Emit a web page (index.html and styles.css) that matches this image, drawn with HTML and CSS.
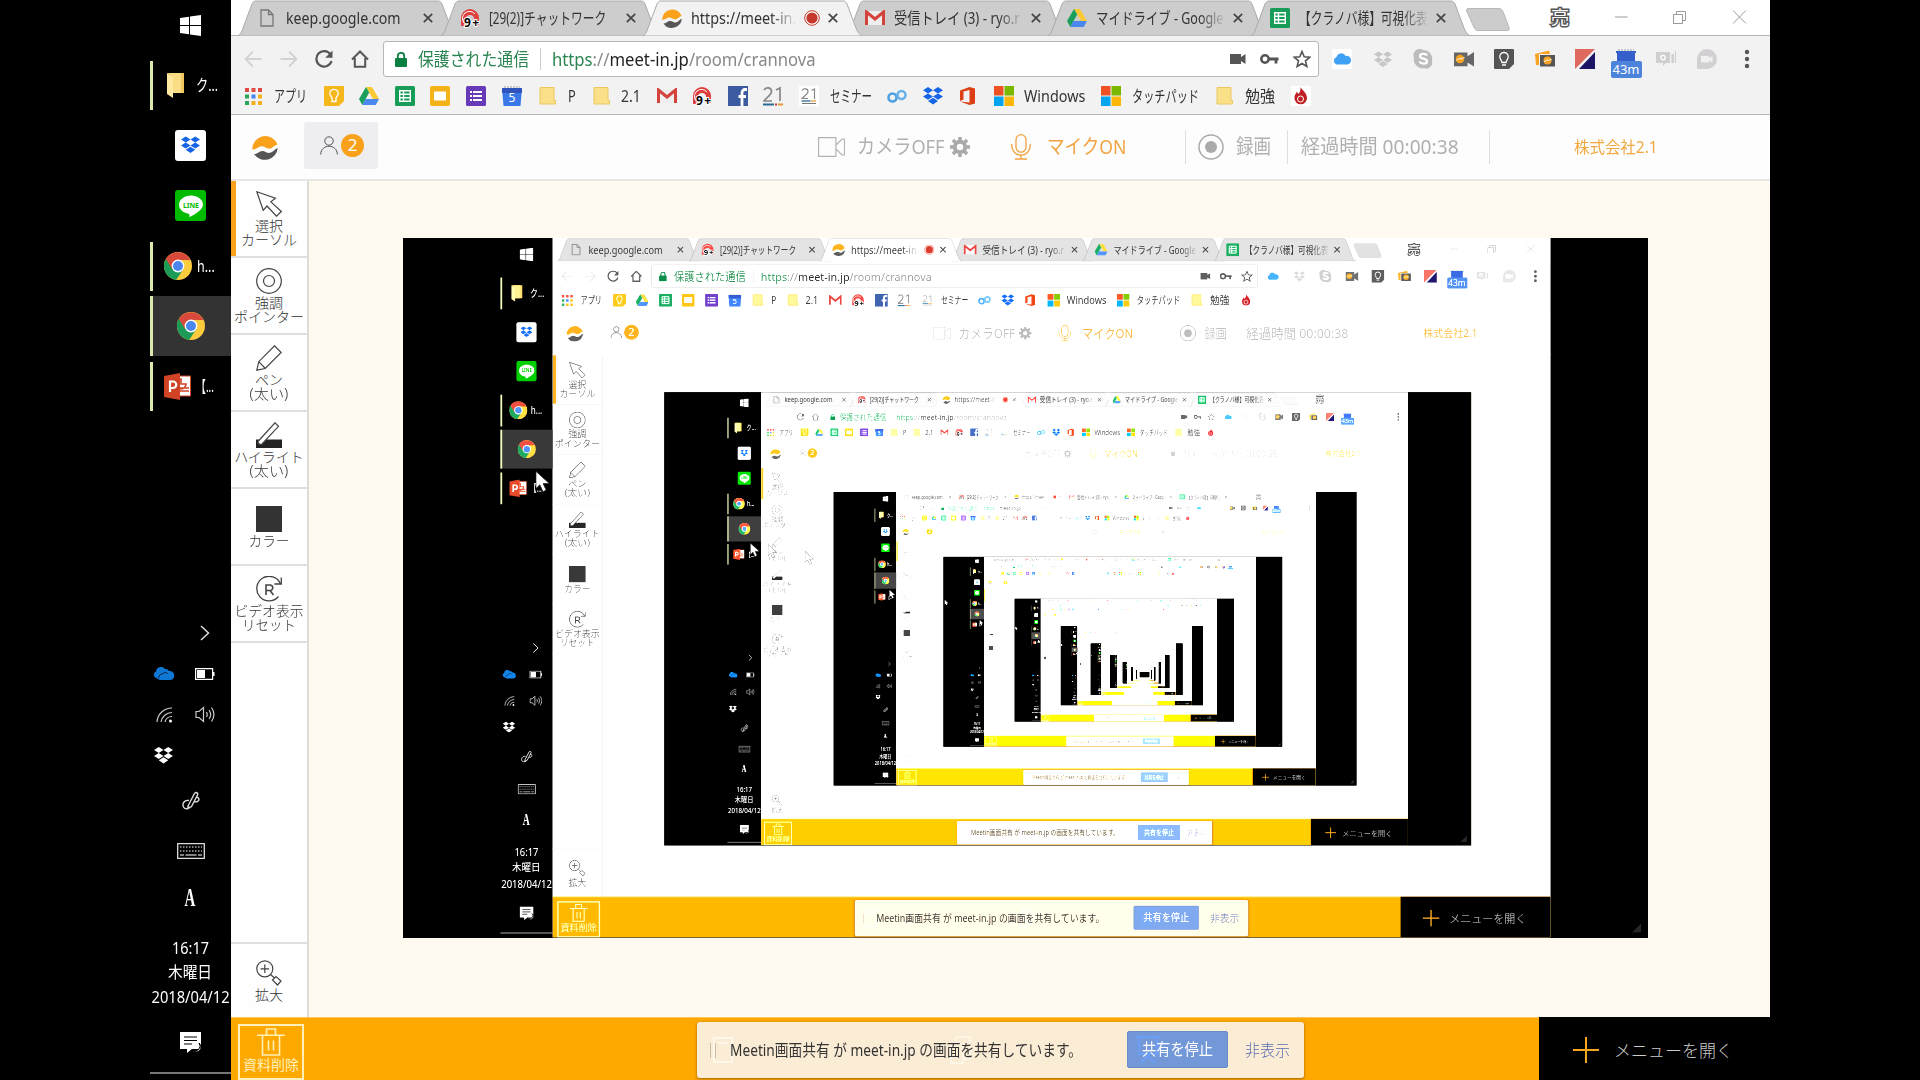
FILE: index.html
```html
<!DOCTYPE html>
<html lang="ja">
<head>
<meta charset="utf-8">
<title>meet-in</title>
<link rel="stylesheet" href="styles.css">
</head>
<body>
<svg class="defs" width="0" height="0">
  <defs>
    <symbol id="dropbox" viewBox="0 0 20 18"><path d="M5 0l5 3.2-5 3.2-5-3.2zM15 0l5 3.2-5 3.2-5-3.2zM5 6.4l5 3.2-5 3.2-5-3.2zM15 6.4l5 3.2-5 3.2-5-3.2zM5 14l5-3.2L15 14l-5 3.4z" fill="currentColor"/></symbol>
    <symbol id="chrome" viewBox="0 0 28 28"><circle cx="14" cy="14" r="14" fill="#f9cb3d"/><path d="M14 14L2 6.800A14 14 0 0 0 12 27.900L19.500 17z" fill="#1c9a57"/><path d="M1.900 7A14 14 0 0 1 26.500 8H14l-6 9z" fill="#d8483b"/><circle cx="14" cy="14" r="6.400" fill="#fff"/><circle cx="14" cy="14" r="5" fill="#4a86ee"/></symbol>
    <symbol id="drive" viewBox="0 0 20 18"><path d="M7 0h6l7 12h-6z" fill="#fcc934"/><path d="M7 0l3.200 5.500L3.300 18 0 12z" fill="#1a9f5c"/><path d="M6.500 12H20l-3.300 6H3.300z" fill="#4a87ee"/></symbol>
    <symbol id="sheets" viewBox="0 0 20 20"><rect width="20" height="20" rx="1.500" fill="#189d58"/><path d="M4.700 4.700h10.600v10.600H4.700zM4.700 8.200h10.600M4.700 11.800h10.600M8.500 4.700v10.600" fill="none" stroke="#fff" stroke-width="1.400"/></symbol>
    <symbol id="gmail" viewBox="0 0 20 16"><path d="M1 1h18v14H1z" fill="#eee"/><path d="M1.500 15V2l8.500 7 8.500-7v13" fill="none" stroke="#d3423b" stroke-width="3"/></symbol>
    <symbol id="chatwork" viewBox="0 0 20 20"><path d="M1 18V10a9 9 0 0 1 18 0v7h-5v-6a4 4 0 0 0-8 0v7z" fill="#df3f3c"/><path d="M4 15a7 7 0 0 1 11-9" fill="none" stroke="#fff" stroke-width="1"/><text x="4" y="18.500" font-size="12" font-weight="700" stroke="#fff" stroke-width="2" paint-order="stroke" textLength="15">9+</text></symbol>
    <symbol id="meetin" viewBox="0 0 26 26"><path d="M.3 15.500A13 13 0 0 1 25.500 10.500c-3 .5-4 3-7 4-4 1-6-3-10-2-3 .7-4 3-8.200 3z" fill="#f9a11b"/><path d="M2 20c4 .5 5-3.500 9-3 3.500.5 4 3 8 1.500 3-1.200 3.500-3.500 6.800-4.500A13 13 0 0 1 2 20z" fill="#555"/></symbol>
    <symbol id="folder" viewBox="0 0 20 20"><path d="M3 1.500h14v13h1.500v3.500H3z" fill="#fbe08a" stroke="#ecc85c" stroke-width="1"/></symbol>
    <symbol id="mswin" viewBox="0 0 20 20"><path d="M0 0h9.500v9.500H0z" fill="#ee5223"/><path d="M10.500 0H20v9.500h-9.500z" fill="#7ab800"/><path d="M0 10.500h9.500V20H0z" fill="#05a4ee"/><path d="M10.500 10.500H20V20h-9.500z" fill="#fcb80a"/></symbol>
    <symbol id="close" viewBox="0 0 10 10"><path d="M.8.8l8.400 8.400M9.200.8L.8 9.200" stroke="#444" stroke-width="1.700"/></symbol>
    <symbol id="tabshape" viewBox="0 0 219 36" preserveAspectRatio="none"><path d="M0 36c3-2 4-5 5-8L14 4c1-2 2-3 4-3h182c2 0 3 1 4 3l9 24c1 3 3 6 6 8z" fill="currentColor" stroke="#aaa" stroke-width="1"/></symbol>
    <symbol id="arrow" viewBox="0 0 20 28"><path d="M1 1v22l5-5 4 9 4-2-4-8.500h8z" fill="#fff" stroke="#222" stroke-width="1"/></symbol>
  </defs>
</svg>

<div class="screen">
  <aside class="taskbar">
    <div class="tasks">
      <div class="task"><svg width="21" height="21" viewBox="0 0 21 21"><path d="M0 3l9-1.300V10H0zM10 1.500L21 0v10H10zM0 11h9v8.300L0 18zM10 11h11v10l-11-1.500z" fill="#fff"/></svg></div>
      <div class="task run"><svg width="19" height="27" viewBox="0 0 19 27"><path d="M3 1h14v20H3z" fill="#f0c75e"/><path d="M0 1l6 4v21l-6-4z" fill="#ffe9a0"/><path d="M6 5l-6-4h14v20H6z" fill="#f9dc84"/></svg><span data-fit="22">ク...</span></div>
      <div class="task"><b class="tile white"><svg width="19" height="18"><use href="#dropbox"/></svg></b></div>
      <div class="task"><b class="tile line"><svg width="24" height="24" viewBox="0 0 24 24"><path d="M12 1.500C5.500 1.500 0 5.500 0 10.800c0 4.500 4 8 9.500 9 1 .3 1 1.200.8 3.200C13 22 24 16.500 24 10.800 24 5.500 18.500 1.500 12 1.500z" fill="#fff"/><text x="4" y="13.500" font-size="7" font-weight="700" fill="#0b0" textLength="16">LINE</text></svg></b></div>
      <div class="task run"><svg width="28" height="28"><use href="#chrome"/></svg><span class="h" data-fit="18">h...</span></div>
      <div class="task run on"><svg width="28" height="28"><use href="#chrome"/></svg></div>
      <div class="task run"><svg width="27" height="27" viewBox="0 0 27 27"><path d="M13 3h13.500v20H13z" fill="#fff" stroke="#d04425"/><path d="M17 6v5h5a5 5 0 1 1-5-5zM16 15h9M16 18h9" fill="none" stroke="#d04425" stroke-width="1.600"/><path d="M0 3l16-3v27L0 24z" fill="#d04425"/><path d="M6 19V8.500h3a3 3 0 0 1 0 6.500H6" fill="none" stroke="#fff" stroke-width="2.200"/></svg><span class="h" data-fit="18">【...</span></div>
    </div>
    <div class="tray">
      <div class="pair"><i></i><svg width="10" height="16" viewBox="0 0 10 16"><path d="M1 1l7.500 7L1 15" fill="none" stroke="#ddd" stroke-width="1.500"/></svg></div>
      <div class="pair"><svg width="21" height="14" viewBox="0 0 21 14"><path d="M3 11a3.500 3.500 0 0 1 0-6.500A5 5 0 0 1 12 2a4 4 0 0 1 4 2 4.500 4.500 0 0 1 1.500 9H7z" fill="#0f78d4"/><path d="M5.500 11c.5-3 2-4 4.200-4 1-2 4-2 5 0" fill="none" stroke="#000" stroke-width=".7"/></svg><svg width="20" height="12" viewBox="0 0 20 12"><path d="M.6.6h17v10.800H.600z" fill="none" stroke="#fff" stroke-width="1.200"/><path d="M2 2h8v8H2zM18 4h1.500v4H18z" fill="#fff"/></svg></div>
      <div class="pair"><svg width="16" height="17" viewBox="0 0 16 17"><path d="M1 16A15 15 0 0 1 16 2M5 16A11 11 0 0 1 16 6.500M9 16a7 7 0 0 1 7-5.500" fill="none" stroke="#ccc" stroke-width="1.200"/><circle cx="14.500" cy="15" r="1.500" fill="#fff"/></svg><svg width="20" height="17" viewBox="0 0 20 17"><path d="M1 5.500h3L8.500 1.500v14L4 11.500H1zM11.500 6c1 2 1 3.500 0 5M14 4c2.200 3 2.200 6 0 9M16.500 1.500c3.500 5 3.500 9 0 14" fill="none" stroke="#ccc" stroke-width="1.200"/></svg></div>
      <div class="pair"><svg class="w" width="19" height="17"><use href="#dropbox"/></svg><i></i></div>
      <div class="cell c50"><svg width="18" height="19" viewBox="0 0 18 19"><path d="M6 15L12.500 2.500c1-2 4-.5 3 1.500L9.500 15.500 6 17.500zM7 9.500C2 8.500 0 13 1.500 16c1.500 3 5.500 1.500 5.500-.5M14 6c3 0 4 3 1.500 4.500-1.500.7-3 0-3 0" fill="none" stroke="#ddd" stroke-width="1.400"/></svg></div>
      <div class="cell c50"><svg width="28" height="16" viewBox="0 0 28 16"><path d="M.7.700h26.600v14.600H.700z" fill="none" stroke="#ddd" stroke-width="1.300"/><path d="M3 4h22M3 8h22" stroke="#aaa" stroke-width="1.300" stroke-dasharray="1.500 1.500"/><path d="M3 12h4M8.500 12h11M21 12h4" stroke="#aaa" stroke-width="1.300"/></svg></div>
      <div class="cell c44"><span class="ime">A</span></div>
      <div class="clock"><span data-fit="37">16:17</span><span data-fit="44">木曜日</span><span data-fit="78">2018/04/12</span></div>
      <div class="cell notif"><svg width="22" height="22" viewBox="0 0 22 22"><path d="M0 0h21v17H12l-5 4v-4H0z" fill="#fff"/><path d="M4 5h13M4 8.500h13M4 12h8" stroke="#000" stroke-width="1.200"/><path d="M19 11a5 5 0 1 1-7 7 5 5 0 0 0 7-7z" fill="#fff" stroke="#000"/></svg></div>
    </div>
  </aside>

  <div class="browser">
    <div class="tabs">
      <div class="tab"><svg class="shape"><use href="#tabshape"/></svg><svg class="fav" width="14" height="18" viewBox="0 0 14 18"><path d="M1 1h7.500L13 5.500V17H1zM8.500 1v4.500H13" fill="none" stroke="#777" stroke-width="1.300"/></svg><span class="name"><span data-fit="115">keep.google.com</span></span><svg width="10" height="10"><use href="#close"/></svg></div>
      <div class="tab"><svg class="shape"><use href="#tabshape"/></svg><svg class="fav" width="20" height="20"><use href="#chatwork"/></svg><span class="name"><span data-fit="117">[29(2)]チャットワーク</span></span><svg width="10" height="10"><use href="#close"/></svg></div>
      <div class="tab act"><svg class="shape"><use href="#tabshape"/></svg><svg class="fav" width="20" height="20"><use href="#meetin"/></svg><span class="name short"><span data-fit="105">https://meet-in.</span></span><svg class="rec" width="16" height="16" viewBox="0 0 16 16"><circle cx="8" cy="8" r="7.300" fill="#fff" stroke="#c5382b"/><circle cx="8" cy="8" r="5.600" fill="#c5382b"/></svg><svg width="10" height="10"><use href="#close"/></svg></div>
      <div class="tab"><svg class="shape"><use href="#tabshape"/></svg><svg class="fav" width="20" height="16"><use href="#gmail"/></svg><span class="name fade"><span data-fit="126">受信トレイ (3) - ryo.r</span></span><svg width="10" height="10"><use href="#close"/></svg></div>
      <div class="tab"><svg class="shape"><use href="#tabshape"/></svg><svg class="fav" width="20" height="18"><use href="#drive"/></svg><span class="name fade"><span data-fit="127">マイドライブ - Google</span></span><svg width="10" height="10"><use href="#close"/></svg></div>
      <div class="tab"><svg class="shape"><use href="#tabshape"/></svg><svg class="fav" width="20" height="20"><use href="#sheets"/></svg><span class="name fade"><span data-fit="129">【クラノバ様】可視化表</span></span><svg width="10" height="10"><use href="#close"/></svg></div>
      <svg class="newtab" width="44" height="23" viewBox="0 0 44 23"><path d="M2 .5h31c2 0 3 1 4 3l6 16c.5 2 0 3-2 3H12c-2 0-3-1-4-3L.7 3C.3 1 1 .5 2 .5z" fill="#ccc" stroke="#b8b8b8"/></svg>
      <span class="user">亮</span>
      <svg class="win" width="132" height="14" viewBox="0 0 132 14"><path d="M0 7h12.500M58.500 4.500h9v9h-9zM61.500 4V1.500h9v9H68M118 .5L131 13.500M131 .5L118 13.500" fill="none" stroke="#999"/></svg>
    </div>
    <div class="toolbar">
      <div class="nav">
        <svg viewBox="0 0 18 18"><path d="M17.500 9H2M9 1.500L1.500 9 9 16.500" fill="none" stroke="#d2d2d2" stroke-width="1.800"/></svg>
        <svg viewBox="0 0 18 18"><path d="M.5 9H16M9 1.500L16.500 9 9 16.500" fill="none" stroke="#d2d2d2" stroke-width="1.800"/></svg>
        <svg viewBox="0 0 18 18"><path d="M15.500 4.500A7.700 7.700 0 1 0 16.500 11" fill="none" stroke="#555" stroke-width="2.200"/><path d="M17.500.5v7.300h-7.300z" fill="#555"/></svg>
        <svg viewBox="0 0 18 18"><path d="M1 9.500L9 1.500l8 8M3.800 8v8.800h10.400V8" fill="none" stroke="#555" stroke-width="2"/></svg>
      </div>
      <div class="omnibox">
        <svg width="12" height="15" viewBox="0 0 12 15"><rect y="6" width="12" height="9" rx="1" fill="#0b8043"/><path d="M2.800 7V4a3.200 3.200 0 0 1 6.400 0v3" fill="none" stroke="#0b8043" stroke-width="1.800"/></svg>
        <span class="secure" data-fit="111">保護された通信</span>
        <span class="url"><span data-fit="264"><span class="g">https</span><span class="l">://</span>meet-in.jp<span class="l">/room/crannova</span></span></span>
        <div class="omni-icons">
          <svg width="16" height="12" viewBox="0 0 16 12"><path d="M0 1h11v3l4.500-3v10L11 8v3H0z" fill="#555"/></svg>
          <svg width="19" height="12" viewBox="0 0 19 12"><circle cx="5" cy="6" r="3.700" fill="none" stroke="#555" stroke-width="2.500"/><path d="M9 6h9.500M16 6v4.500" stroke="#555" stroke-width="2.800"/></svg>
          <svg width="18" height="18" viewBox="0 0 18 18"><path d="M9 1.500l2.200 5.300 5.600.4-4.300 3.700 1.400 5.600L9 13.500l-4.900 3 1.400-5.600L1.200 7.200l5.600-.4z" fill="none" stroke="#555" stroke-width="1.600"/></svg>
        </div>
      </div>
      <div class="exts">
        <svg viewBox="0 0 20 20"><rect width="20" height="20" rx="1.500" fill="#fff"/><path d="M4.500 15.500a4 4 0 0 1 0-7.500 5 5 0 0 1 9.200-1 4.300 4.300 0 0 1 2 8.500z" fill="#3fa2f5"/></svg>
        <svg viewBox="0 0 20 20" class="gray"><use href="#dropbox" x="1" y="2" width="18" height="17"/></svg>
        <svg viewBox="0 0 20 20"><path d="M6 0a6 6 0 0 1 4 1 9 9 0 0 1 9 11 6 6 0 0 1-8 7.200A9 9 0 0 1 1 8.500 6 6 0 0 1 6 0z" fill="#bcbcbc"/><path d="M14 6.500c-1-2-7-2.500-7 .7 0 3 7 2 7 5 0 3.300-6 3-7.700.3" fill="none" stroke="#fff" stroke-width="2.300"/></svg>
        <svg viewBox="0 0 20 20"><path d="M0 3.500h13.500v3.700L20 3v14.500l-6.500-4v3.700H0z" fill="#666"/><circle cx="6" cy="10" r="4.300" fill="#f8a323"/><path d="M2.500 11c2 0 2-2.200 4.500-1.200 1.700.5 1.700-1.300 3.500-1.300" fill="none" stroke="#fff"/></svg>
        <svg viewBox="0 0 20 20"><path d="M1 0h18a1 1 0 0 1 1 1v14l-5 5H1a1 1 0 0 1-1-1V1a1 1 0 0 1 1-1z" fill="#555"/><path d="M8 13.500c0-2-2.200-3-2.200-5.800a4.200 4.200 0 0 1 8.400 0c0 2.800-2.200 3.800-2.200 5.800zM8 16h4" fill="none" stroke="#fff" stroke-width="1.300"/></svg>
        <svg viewBox="0 0 20 20"><path d="M0 5l14-3.500 1 3.500H4v11H1z" fill="#f8a323"/><path d="M5 6h15v11.500H5z" fill="#555"/><circle cx="12.500" cy="11.500" r="4" fill="#f8a323"/><path d="M9 12.500c2 0 2-2 3.500-1.300s2-.7 4-.7" fill="none" stroke="#fff"/></svg>
        <svg viewBox="0 0 20 20"><path d="M0 0h20L0 20z" fill="#e0695f"/><path d="M20 3v17H4z" fill="#1c1464"/></svg>
        <span class="cal"><svg viewBox="0 0 20 14"><path d="M1 3h18v11H1zM0 2h20v2H0z" fill="#3560cc"/><path d="M2 1h16" stroke="#bbb" stroke-width="1.500" stroke-dasharray="2 1"/></svg><em>43m</em></span>
        <svg viewBox="0 0 20 20"><path d="M0 3h14v11h-4l-3 3v-3H0zM15.500 5H18v9h-2.500zM19 2h1v12h-1z" fill="#cfcfcf"/><circle cx="7" cy="8.500" r="2.200" fill="none" stroke="#fff" stroke-width="1.300"/></svg>
        <svg viewBox="0 0 20 20"><path d="M10 0a10 10 0 1 1 0 20H0V10A10 10 0 0 1 10 0z" fill="#d2d0d2"/><path d="M4 7h8v2l3.500-2v6.500L12 11.500v2H4z" fill="#f0f0f0"/></svg>
        <svg viewBox="0 0 20 20"><circle cx="10" cy="3" r="2.200" fill="#555"/><circle cx="10" cy="10" r="2.200" fill="#555"/><circle cx="10" cy="17" r="2.200" fill="#555"/></svg>
      </div>
    </div>
    <div class="bookmarks">
      <div class="bm apps"><svg viewBox="0 0 20 20"><path d="M2 2h4v4H2zM8.500 2h4v4h-4zM15 2h4v4h-4z" fill="#de4b42"/><path d="M2 8.500h4v4H2zM2 15h4v4H2z" fill="#2fa359"/><path d="M8.500 8.500h4v4h-4z" fill="#4285f4"/><path d="M15 8.500h4v4h-4zM8.500 15h4v4h-4zM15 15h4v4h-4z" fill="#f2b01e"/></svg><span data-fit="33">アプリ</span></div>
      <div class="bm"><svg viewBox="0 0 20 20"><path d="M1 0h18a1 1 0 0 1 1 1v14l-5 5H1a1 1 0 0 1-1-1V1a1 1 0 0 1 1-1z" fill="#f6b71c"/><path d="M8 12.500c0-2-2.200-2.500-2.200-5a4.200 4.200 0 0 1 8.400 0c0 2.500-2.200 3-2.200 5v3H8z" fill="none" stroke="#fff" stroke-width="1.300"/></svg></div>
      <div class="bm"><svg viewBox="0 0 20 20"><use href="#drive" y="1" width="20" height="18"/></svg></div>
      <div class="bm"><svg><use href="#sheets"/></svg></div>
      <div class="bm"><svg viewBox="0 0 20 20"><rect width="20" height="20" rx="2" fill="#f3b217"/><path d="M4 5.500h12v9H4z" fill="#fff"/></svg></div>
      <div class="bm"><svg viewBox="0 0 20 20"><rect width="20" height="20" rx="1.500" fill="#673ab7"/><path d="M4 6h2M7 6h9M4 10h2M7 10h9M4 14h2M7 14h9" stroke="#fff" stroke-width="2"/></svg></div>
      <div class="bm"><svg viewBox="0 0 20 20"><path d="M0 2h20l-1.500 18h-17z" fill="#3b78e7"/><path d="M0 2h20v5H0z" fill="#2f55bd"/><path d="M2 1h16" stroke="#bbb" stroke-width="1.500" stroke-dasharray="2 1"/><text x="6.500" y="16" font-size="12" fill="#fff">5</text></svg></div>
      <div class="bm"><svg><use href="#folder"/></svg><span data-fit="8">P</span></div>
      <div class="bm"><svg><use href="#folder"/></svg><span data-fit="20">2.1</span></div>
      <div class="bm"><svg viewBox="0 0 20 20"><use href="#gmail" y="2" width="20" height="16"/></svg></div>
      <div class="bm"><svg><use href="#chatwork"/></svg></div>
      <div class="bm"><svg viewBox="0 0 20 20"><path d="M0 0h20v20H0z" fill="#3b5a9f"/><path d="M14 20v-9M19 3.500h-2a3 3 0 0 0-3 3V12M10.500 10.500h7.500" fill="none" stroke="#fff" stroke-width="2.800"/></svg></div>
      <div class="bm"><svg viewBox="0 0 20 20"><path d="M1 4c2-3.500 7.500-2.500 7.500 1.500C8.500 9 3 12 1 15h8M13 4l4-2v13" fill="none" stroke="#888" stroke-width="1.700"/><path d="M0 18.500h11" stroke="#2b6a94" stroke-width="2"/><path d="M12 18.500h2" stroke="#c33" stroke-width="2"/><path d="M15 18.500h5" stroke="#e69b32" stroke-width="2"/></svg></div>
      <div class="bm"><svg viewBox="0 0 20 20"><path d="M0 0h20v20H0z" fill="#fff"/><path d="M3 4.500c1.500-2.500 6-2 6 1C9 8 5 10 3 12.500h6M12.500 4.500l3-1.500v10" fill="none" stroke="#888" stroke-width="1.200"/><path d="M2.500 15h9" stroke="#2b6a94" stroke-width="1.300"/><path d="M12 15h5" stroke="#e69b32" stroke-width="1.300"/><path d="M3 17.500h14" stroke="#777"/></svg><span data-fit="42">セミナー</span></div>
      <div class="bm"><svg viewBox="0 0 20 20"><circle cx="5.500" cy="11.500" r="4" fill="none" stroke="#4b9fe0" stroke-width="2.600"/><circle cx="14.500" cy="9" r="4" fill="none" stroke="#6ab2ea" stroke-width="2.600"/></svg></div>
      <div class="bm blue"><svg viewBox="0 0 20 20"><use href="#dropbox" y="1" width="20" height="18"/></svg></div>
      <div class="bm"><svg viewBox="0 0 20 20"><path d="M2 4.500L11.500 1 17 2.500v15L11.500 19 2 15.500l9.500 1V4L5.500 5.500v8L2 15z" fill="#dc3e15"/></svg></div>
      <div class="bm"><svg><use href="#mswin"/></svg><span data-fit="61">Windows</span></div>
      <div class="bm"><svg><use href="#mswin"/></svg><span data-fit="67">タッチパッド</span></div>
      <div class="bm"><svg><use href="#folder"/></svg><span data-fit="30">勉強</span></div>
      <div class="bm"><svg viewBox="0 0 20 20"><path d="M0 0h20v20H0z" fill="#fff"/><path d="M9.500 1c1.500 3 6.500 6 6.500 11a6.300 6.300 0 0 1-12.600 0C3.400 9 5 7.500 6 5.500c.5 1.500 1 2 1.500 2.500C9 6 9.800 4 9.500 1z" fill="#bf1f24"/><circle cx="9.500" cy="13" r="3" fill="none" stroke="#fff"/></svg></div>
    </div>

    <header class="meet">
      <svg class="brand" width="26" height="26"><use href="#meetin"/></svg>
      <div class="people"><svg width="18" height="19" viewBox="0 0 18 19"><circle cx="9" cy="5" r="4.200" fill="none" stroke="#555"/><path d="M.7 18.500c0-11 16.600-11 16.600 0" fill="none" stroke="#555"/></svg><b>2</b></div>
      <div class="cam"><svg width="27" height="20" viewBox="0 0 27 20"><path d="M.6.6h17.300v18.800H.6zM18 8l6-6h2.500v16H24l-6-6" fill="none" stroke="#b4b4b4" stroke-width="1.200"/></svg><span data-fit="87">カメラOFF</span><svg class="gear" width="20" height="20" viewBox="-10 -10 20 20"><circle r="5.200" fill="none" stroke="#aaa" stroke-width="4"/><path d="M-1.800-10h3.600V-6h-3.600zM-1.800 6h3.600v4h-3.600zM-10-1.800h4v3.600h-4zM6-1.800h4v3.600H6z" fill="#aaa"/><path d="M-1.800-10h3.600V-6h-3.600zM-1.800 6h3.600v4h-3.600zM-10-1.800h4v3.600h-4zM6-1.800h4v3.600H6z" fill="#aaa" transform="rotate(45)"/></svg></div>
      <div class="mic"><svg width="20" height="26" viewBox="0 0 20 26"><rect x="5" y=".7" width="10" height="17.500" rx="5" fill="none" stroke="#f2a340" stroke-width="1.300"/><path d="M.7 10c0 15 18.600 15 18.600 0M10 21.500V25M4 25h12" fill="none" stroke="#f2a340" stroke-width="1.300"/></svg><span data-fit="79">マイクON</span></div>
      <i class="rule r1"></i>
      <svg class="recbtn" width="26" height="26" viewBox="0 0 26 26"><circle cx="13" cy="13" r="12" fill="none" stroke="#aaa" stroke-width="1.500"/><circle cx="13" cy="13" r="6" fill="#aaa"/></svg><span class="g1" data-fit="35">録画</span>
      <i class="rule r2"></i>
      <span class="g2" data-fit="158">経過時間 00:00:38</span>
      <i class="rule r3"></i>
      <span class="company" data-fit="84">株式会社2.1</span>
    </header>

    <div class="work">
      <nav class="tools">
        <div class="tool sel"><svg viewBox="0 0 26 26"><path d="M.8.8l18.600 6.400-4.500 3.700L25.300 20.500l-4.800 4.700L11 15 7.200 19.300z" fill="none" stroke="#444" stroke-width="1.200"/></svg><span data-fit="28">選択</span><span data-fit="56">カーソル</span></div>
        <div class="tool"><svg viewBox="0 0 26 26"><circle cx="13" cy="13" r="12.300" fill="none" stroke="#444" stroke-width="1.200"/><circle cx="13" cy="13" r="5.500" fill="none" stroke="#444" stroke-width="1.200"/></svg><span data-fit="28">強調</span><span data-fit="70">ポインター</span></div>
        <div class="tool"><svg viewBox="0 0 26 26"><path d="M.8 25.200l2-8.500L18.500.8l6.700 6.700-16 16zM2.800 16.700l6.500 6.800" fill="none" stroke="#444" stroke-width="1.200"/></svg><span data-fit="28">ペン</span><span data-fit="39">(太い)</span></div>
        <div class="tool"><svg viewBox="0 0 26 26"><path d="M0 17.500h26V26H0z" fill="#222"/><path d="M2 19.500L19 .8l3.500 3.500L6 22c-3 1-4-1-4-2.500z" fill="#fff" stroke="#444" stroke-width="1.200"/></svg><span data-fit="70">ハイライト</span><span data-fit="39">(太い)</span></div>
        <div class="tool"><svg viewBox="0 0 26 26"><path d="M0 0h26v26H0z" fill="#333"/></svg><span data-fit="41">カラー</span></div>
        <div class="tool"><svg viewBox="0 0 26 26"><path d="M22.500 20.500A12.300 12.300 0 1 1 24.500 8M25.300 1.500V8h-7" fill="none" stroke="#444" stroke-width="1.300"/><path d="M10 19V9h4a2.700 2.700 0 0 1 0 5.500h-4M14 14.500l3.500 4.500" fill="none" stroke="#444" stroke-width="1.600"/></svg><span data-fit="69">ビデオ表示</span><span data-fit="54">リセット</span></div>
        <div class="tool last"><svg viewBox="0 0 26 26"><circle cx="8.800" cy="8.800" r="8" fill="none" stroke="#444" stroke-width="1.200"/><path d="M4.500 8.800h8.600M8.800 4.500v8.600M14.500 14.500l4 3.500M16.500 20l3.500-3.500 5 4.500-3.500 4z" fill="none" stroke="#444" stroke-width="1.200"/></svg><span data-fit="28">拡大</span></div>
      </nav>
      <main class="canvas"><div class="viewport"></div></main>
    </div>

    <footer class="bottom">
      <div class="trash"><svg width="28" height="28" viewBox="0 0 28 28"><path d="M0 7.200h28M9.500 7V1h9v6M5.500 7.500V27h17V7.500M11.500 12.500v10M16.500 12.500v10" fill="none" stroke="#fff0b8" stroke-width="1.600"/></svg><span data-fit="56">資料削除</span></div>
      <div class="share">
        <i class="grip"></i>
        <svg class="ghost" width="20" height="26" viewBox="0 0 20 26"><path d="M1 1h18v24H1zM5 6h10" fill="none" stroke="#fff8ea" stroke-width="2"/></svg>
        <span class="msg" data-fit="352">Meetin画面共有 が meet-in.jp の画面を共有しています。</span>
        <span class="stop"><span data-fit="71">共有を停止</span></span>
        <span class="hide" data-fit="45">非表示</span>
        <svg class="under u1" width="22" height="28" viewBox="0 0 22 28"><path d="M6 1h14v22h-6M1 8h12v19H1zM6 8V1" fill="none" stroke="#fff8ea" stroke-width="1.600"/></svg>
        <svg class="under u2" width="24" height="28" viewBox="0 0 24 28"><path d="M0 1h24M3 1v17h18V1M12 18v4M12 20l-7 7M12 20l7 7" fill="none" stroke="#6ba0ff" stroke-width="1.600"/></svg>
      </div>
      <div class="menu"><svg width="26" height="26" viewBox="0 0 26 26"><path d="M13 0v26M0 13h26" stroke="#f7a51c" stroke-width="2"/></svg><span data-fit="119">メニューを開く</span></div>
    </footer>
  </div>
  <svg class="pointer p1"><use href="#arrow"/></svg>
  <svg class="pointer p2"><use href="#arrow"/></svg>
  <svg class="pointer p3"><use href="#arrow"/></svg>
  <svg class="pointer p4"><use href="#arrow"/></svg>
  <i class="corner"></i>
</div>
<script src="main.js"></script>
</body>
</html>
```
FILE: styles.css
```css
* { box-sizing: border-box; }
html, body { margin: 0; width: 1920px; height: 1080px; overflow: hidden; background: #000; }
body { font-family: "Noto Sans", "Noto Sans CJK JP", sans-serif; font-size: 16px; color: #333; line-height: 1; }
svg { display: block; flex: none; }
i, em { font-style: normal; }
.defs { position: absolute; }
[data-fit] { display: inline-block; white-space: nowrap; transform-origin: 0 50%; flex: none; }

.screen { position: relative; width: 1920px; height: 1080px; background: #000; display: flex; padding: 0 150px; overflow: hidden; }

/* Windows taskbar */
.taskbar { width: 81px; display: flex; flex-direction: column; justify-content: space-between; color: #fff; flex: none; overflow: hidden; }
.tasks { margin-top: -5px; }
.task { height: 60.200px; display: flex; align-items: center; justify-content: center; position: relative; }
.task.run { justify-content: flex-start; padding-left: 14px; gap: 5px; }
.task:nth-child(2) { padding-left: 17px; gap: 10px; }
.task.run::before { content: ""; position: absolute; left: 0; top: 6px; bottom: 5px; width: 3px; background: #d9e8ac; }
.task.on { background: #333; justify-content: center; padding-left: 0; }
.task.on::before { top: 0; bottom: 0; }
.tile { width: 31px; height: 31px; border-radius: 3px; display: flex; align-items: center; justify-content: center; }
.tile.white { background: #fff; color: #1565e6; }
.tile.line { background: #0b0; }
.tray { height: 467px; }
.pair { height: 40.700px; display: grid; grid-template-columns: 27px 27px; column-gap: 14px; align-items: center; justify-items: center; }
.w { color: #fff; }
.cell { display: flex; align-items: center; justify-content: center; }
.c50 { height: 50px; }
.c44 { height: 44px; }
.ime { font-family: "Liberation Serif", serif; font-weight: 700; font-size: 25px; transform: scaleX(.6); }
.clock { padding-top: 16px; display: flex; flex-direction: column; align-items: center; font-size: 16px; }
.clock span { line-height: 24.500px; }
.notif { height: 65px; padding-top: 5px; border-bottom: 2px solid #777; }

/* Browser window */
.browser { width: 1539px; display: flex; flex-direction: column; background: #fff; flex: none; }
.tabs { height: 36px; display: flex; padding-left: 7px; border-bottom: 1px solid #b5b5b5; background: #fff; flex: none; }
.tab { position: relative; width: 219px; margin-right: -16.500px; height: 36px; display: flex; align-items: center; padding: 0 24px 0 18px; color: #cdcdcd; flex: none; }
.tab.act { z-index: 2; color: #f2f2f2; }
.shape { position: absolute; left: 0; top: 0; width: 219px; height: 36px; z-index: 0; }
.tab > *:not(.shape) { position: relative; flex: none; }
.tab > .fav { width: 20px; margin: 0 9px 0 1px; }
.name { width: 130px; overflow: hidden; color: #333; font-size: 16px; line-height: 24px; margin-right: 7px; white-space: nowrap; }
.name.short { width: 106px; margin-right: 7px; -webkit-mask-image: linear-gradient(90deg, #000 75%, transparent); mask-image: linear-gradient(90deg, #000 75%, transparent); }
.name.fade { -webkit-mask-image: linear-gradient(90deg, #000 80%, transparent); mask-image: linear-gradient(90deg, #000 80%, transparent); }
.rec { margin-right: 8px; }
.newtab { margin: 8px 0 0 13px; }
.user { margin: 8px 0 0 41px; width: 18px; font-size: 18px; color: #fff; -webkit-text-stroke: 3px #555; paint-order: stroke; }
.win { margin: 10px 0 0 46px; }

.toolbar { height: 41px; display: flex; background: #f2f2f2; align-items: center; padding: 5px 0 0 13px; flex: none; }
.nav { width: 139px; display: flex; gap: 17.700px; }
.nav svg { width: 18px; height: 18px; }
.omnibox { width: 936px; height: 36px; background: #fff; border: 1px solid #b8b8b8; border-radius: 3px; display: flex; align-items: center; padding: 0 7px 0 11px; font-size: 18px; flex: none; }
.secure { margin-left: 11px; color: #2a8450; }
.url { margin-left: 11px; padding-left: 11px; border-left: 1px solid #ccc; line-height: 22px; color: #222; }
.g { color: #2a8450; }
.l { color: #888; }
.omni-icons { margin-left: auto; display: flex; align-items: center; gap: 14px; }
.exts { display: flex; gap: 20.500px; margin-left: 13px; }
.exts > svg, .cal { width: 20px; height: 20px; flex: none; }
.gray { color: #c6c6c6; }
.cal { position: relative; }
.cal svg { width: 20px; height: 14px; }
.cal em { position: absolute; left: -5px; top: 12px; width: 31px; height: 17px; border-radius: 2px; background: #4c84dc; color: #fff; font-size: 13px; line-height: 16px; text-align: center; }
.bookmarks { height: 38px; background: #f2f2f2; border-bottom: 1.500px solid #b8b8b8; display: flex; align-items: center; gap: 15.600px; padding-left: 12px; flex: none; }
.bm { display: flex; align-items: center; gap: 10.500px; color: #333; font-size: 16px; }
.bm.apps { margin-right: 1.500px; }
.bm svg { width: 20px; height: 20px; }
.bm.blue { color: #1565e6; }

/* Meeting header */
.meet { height: 66px; background: #fdfdfd; border-bottom: 2px solid #e6e6e6; display: flex; align-items: center; padding-left: 21px; color: #b0b0b0; font-size: 20px; flex: none; padding-bottom: 1px; }
.people { margin-left: 26px; width: 74px; height: 47px; background: #eeeef0; border-radius: 3px; display: flex; align-items: center; padding-left: 16px; gap: 3px; margin-top: -2px; }
.people b { width: 23px; height: 23px; border-radius: 50%; background: #f9a11b; color: #fff; font-weight: 400; font-size: 17px; line-height: 22px; text-align: center; }
.cam { margin-left: 440px; display: flex; align-items: center; gap: 12px; }
.gear { margin-left: -6px; }
.mic { margin-left: 41px; display: flex; align-items: center; gap: 16px; color: #f2a340; }
.rule { width: 1px; height: 34px; background: #dedede; flex: none; }
.r1 { margin-left: 58px; }
.recbtn { margin-left: 12px; }
.g1 { margin-left: 12px; }
.r2 { margin-left: 16px; }
.g2 { margin-left: 13px; }
.r3 { margin-left: 31px; }
.company { margin-left: 84px; font-size: 16px; color: #f2a840; }

.work { flex: 1; display: flex; min-height: 0; }
.tools { width: 78px; background: #fefefe; border-right: 2px solid #dcdcdc; display: flex; flex-direction: column; flex: none; }
.tool { height: 77px; border-bottom: 2px solid #dfdfdf; display: flex; flex-direction: column; align-items: center; justify-content: center; font-size: 14px; line-height: 14px; color: #333; flex: none; font-weight: 300; }
.tool svg { width: 26px; height: 26px; margin-bottom: 2px; }
.tool.sel { box-shadow: inset 5px 0 #f9a11b; }
.tool.last { margin-top: auto; height: 75px; border-bottom: 0; border-top: 2px solid #dfdfdf; }
.canvas { flex: 1; background: #fffaf0; padding: 57px 0 0 94px; }
.viewport { width: 1244.500px; height: 699.500px; overflow: hidden; background: #000; filter: brightness(1.11); }
.viewport > .screen { transform: scale(.6482, .6477); transform-origin: 0 0; }

/* Bottom bar */
.bottom { position: relative; height: 63px; background: #ffa800; display: flex; justify-content: space-between; flex: none; border-top: 1px solid #ffc65a; }
.trash { margin: 6px 0 0 7px; width: 66px; height: 56px; border: 2px solid #fff0b8; color: #fff0b8; display: flex; flex-direction: column; align-items: center; padding-top: 2px; font-size: 14px; gap: 2px; }
.menu { width: 231px; background: #000; margin-top: -1px; display: flex; align-items: center; padding: 3px 0 0 34px; gap: 15px; color: #ccc; font-size: 17px; font-weight: 300; }
.share { position: absolute; left: 466px; top: 4px; width: 607px; height: 56px; background: #fbecd5; border-radius: 3px; box-shadow: 0 1px 3px rgba(90, 50, 0, .6); display: flex; align-items: center; padding-left: 13px; font-size: 16px; }
.grip { width: 6px; height: 15px; border: solid #c9bca8; border-width: 0 1.500px; margin-right: -3px; flex: none; }
.ghost { margin-right: -3px; }
.msg { color: #333; z-index: 1; }
.stop { margin-left: 45px; width: 101px; height: 37px; background: #7398d8; border: 1px solid #6a8cc6; border-radius: 2px; color: #fff; display: flex; align-items: center; justify-content: center; margin-top: -2px; flex: none; }
.stop span { z-index: 1; }
.hide { margin-left: 17px; color: #5a70b0; font-weight: 300; }
.under { position: absolute; top: 14px; }
.u1 { left: 253px; }
.u2 { left: 439px; }

/* Mouse pointers captured in the shared picture */
.pointer { display: none; position: absolute; width: 24px; height: 34px; }
.viewport .pointer.p1 { display: block; left: 204px; top: 359px; }
.viewport .viewport .pointer.p2 { display: block; left: 246px; top: 362px; }
.viewport .viewport .pointer.p3 { display: block; left: 334px; top: 378px; }
.viewport .viewport .viewport .viewport .pointer.p4 { display: block; left: 6px; top: 244px; }
.corner { display: none; }
.viewport .corner { display: block; position: absolute; right: 10px; bottom: 8px; width: 14px; height: 14px; background: linear-gradient(135deg, transparent 50%, #222 50%); }
```
FILE: main.js
```js
document.querySelectorAll('[data-fit]').forEach(function (el) {
  var target = Number(el.dataset.fit);
  var natural = el.offsetWidth;
  var rest = target - natural;
  el.style.transform = 'scaleX(' + (target / natural).toFixed(4) + ')';
  if (getComputedStyle(el.parentElement).flexDirection === 'column') {
    el.style.transformOrigin = '50% 50%';
    el.style.marginLeft = el.style.marginRight = rest / 2 + 'px';
  } else {
    el.style.marginRight = rest + 'px';
  }
});

// The shared desktop shows the meeting page, which shows the desktop again.
var depth = 11;
var screenEl = document.querySelector('.screen');
var template = screenEl.cloneNode(true);
var host = screenEl.querySelector('.viewport');
for (var i = 0; i < depth; i++) {
  var copy = template.cloneNode(true);
  host.appendChild(copy);
  host = copy.querySelector('.viewport');
}
```
